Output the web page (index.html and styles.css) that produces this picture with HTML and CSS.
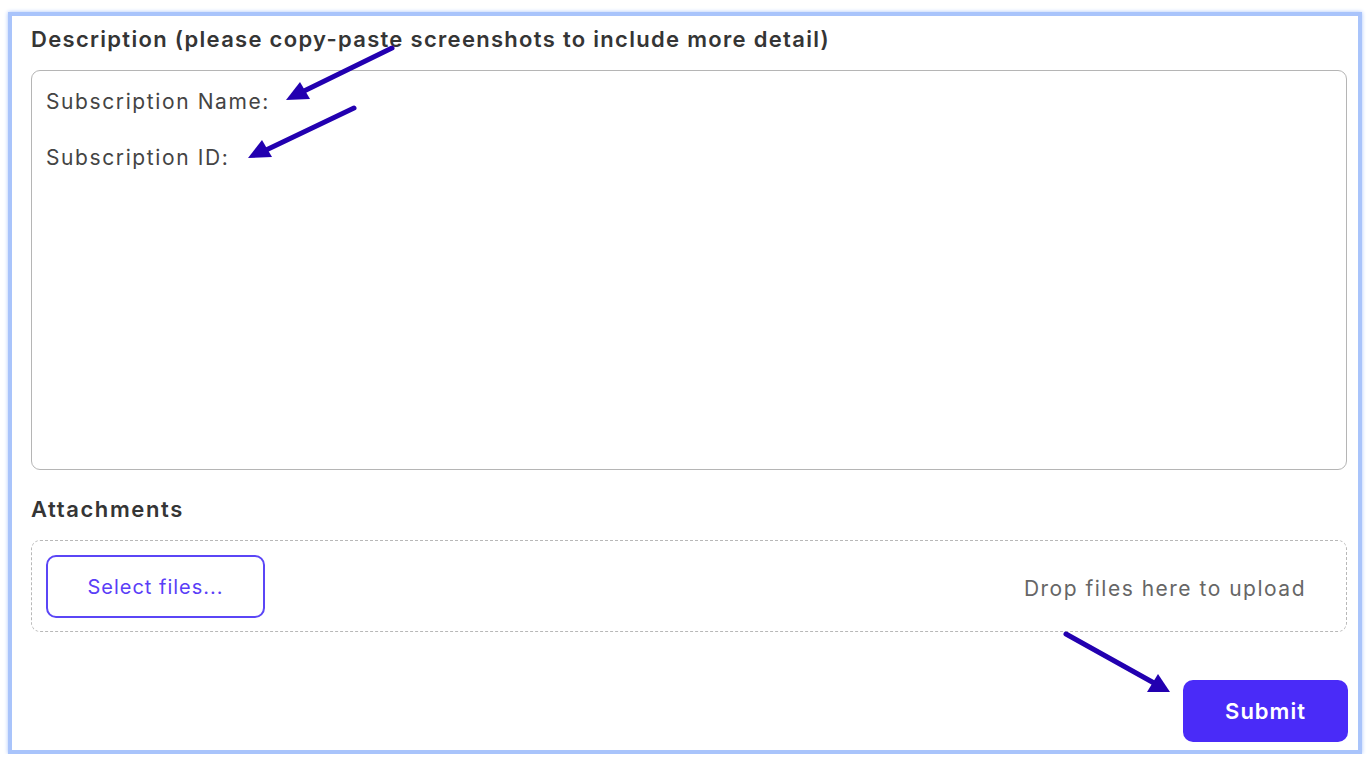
FILE: index.html
```html
<!DOCTYPE html>
<html lang="en">
<head>
  <meta charset="UTF-8">
  <title>Support request</title>
  <link rel="stylesheet" href="styles.css">
</head>
<body>

<div class="frame">
  <form class="ticket-form">
    <label class="field-label">Description (please copy-paste screenshots to include more detail)</label>
    <div class="editor">
      <p>Subscription Name:</p>
      <p>Subscription ID:</p>
    </div>

    <label class="field-label attach-label">Attachments</label>
    <div class="dropzone">
      <button type="button" class="btn-select">Select files...</button>
      <span class="drop-hint">Drop files here to upload</span>
    </div>

    <div class="actions">
      <button type="submit" class="btn-submit">Submit</button>
    </div>
  </form>

  <!-- annotation arrows -->
  <svg class="marks" width="1372" height="766" viewBox="0 0 1372 766">
    <g stroke="#2200b0" stroke-width="5" fill="#2200b0" stroke-linecap="round">
      <line x1="392" y1="48" x2="302" y2="92"/>
      <polygon points="286,100 300,82 310,99" stroke="none"/>
      <line x1="354" y1="108" x2="264" y2="151"/>
      <polygon points="248,158 262,140 272,157" stroke="none"/>
      <line x1="1066" y1="634" x2="1154" y2="683"/>
      <polygon points="1170,692 1147,692 1158,674" stroke="none"/>
    </g>
  </svg>
</div>

</body>
</html>
```

FILE: styles.css
```css
body {
  margin: 0;
  font-family: Inter, "Noto Sans", sans-serif;
  background: #fff;
}

.frame {
  width: 1346px;
  height: 734px;
  margin: 12px 0 0 8px;
  border: 4px solid #a9c4fb;
  box-shadow: 0 0 4px #a9c4fb;
  background: #fff;
}

.ticket-form {
  padding: 8px 11px 0 19px;
}

.field-label {
  display: block;
  font-size: 22px;
  line-height: 30px;
  font-weight: 600;
  letter-spacing: 1.3px;
  color: #353535;
}

.editor {
  margin-top: 16px;
  height: 400px;
  box-sizing: border-box;
  border: 1px solid #b5b5b5;
  border-radius: 9px;
  padding: 17px 14px 0;
  font-size: 21px;
  line-height: 28px;
  letter-spacing: 1.6px;
  color: #444;
}

.editor p {
  margin: 0 0 28px;
}

.attach-label {
  margin-top: 24px;
  letter-spacing: 1.6px;
}

.dropzone {
  margin-top: 16px;
  height: 92px;
  box-sizing: border-box;
  border: 1px dashed #b8b8b8;
  border-radius: 9px;
  padding: 14px 40px 0 14px;
  display: flex;
  justify-content: space-between;
  align-items: flex-start;
}

.btn-select {
  width: 219px;
  height: 63px;
  background: #fff;
  border: 2px solid #5b46f6;
  border-radius: 10px;
  color: #5a3ef7;
  font-family: inherit;
  font-size: 20px;
  letter-spacing: 1px;
  cursor: pointer;
}

.drop-hint {
  font-size: 21px;
  line-height: 67px;
  letter-spacing: 1.5px;
  color: #666;
}

.actions {
  display: flex;
  justify-content: flex-end;
  margin-top: 48px;
  margin-right: -1px;
}

.btn-submit {
  width: 165px;
  height: 62px;
  background: #4a2bf8;
  border: none;
  border-radius: 10px;
  color: #fff;
  font-family: inherit;
  font-size: 22px;
  font-weight: 600;
  letter-spacing: 1px;
  cursor: pointer;
}

.marks {
  position: absolute;
  left: 0;
  top: 0;
  pointer-events: none;
}
```
